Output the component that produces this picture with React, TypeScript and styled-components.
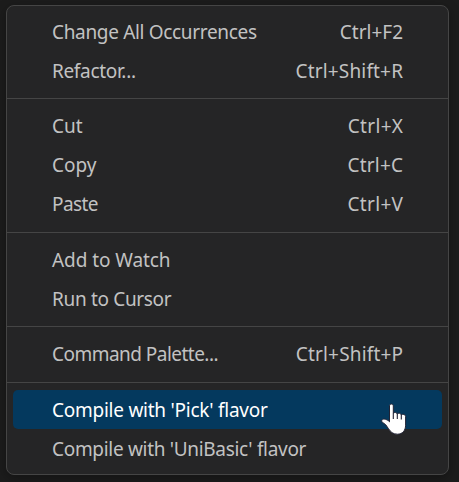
import React from "react";
import styled, { createGlobalStyle } from "styled-components";

const GlobalStyle = createGlobalStyle`
  * { box-sizing: border-box; }
  body {
    margin: 0;
    background: #1c1c1c;
    overflow: hidden;
  }
`;

const Page = styled.main`
  position: relative;
  width: 459px;
  height: 482px;
  padding: 5px 10px 7px 6px;
  background: #1c1c1c;
`;

const Menu = styled.div`
  width: 443px;
  height: 470px;
  padding: 6px 0;
  border: 1px solid #454545;
  border-radius: 8px;
  background: #252526;
  box-shadow: 0 3px 12px rgba(0, 0, 0, 0.32);
  font-family: "Noto Sans", "Open Sans", sans-serif;
  font-size: 19px;
`;

const MenuItem = styled.div<{ $active?: boolean }>`
  display: flex;
  align-items: flex-start;
  justify-content: space-between;
  height: 39px;
  margin: 0 6px;
  padding: 0 39px;
  border-radius: 5px;
  line-height: 40px;
  white-space: pre;
  color: ${({ $active }) => ($active ? "#ffffff" : "#c2c2c2")};
  background: ${({ $active }) => ($active ? "#04395e" : "transparent")};
`;

const Label = styled.span<{ $tracking?: number }>`
  letter-spacing: ${({ $tracking = 0 }) => $tracking}px;
  margin-right: ${({ $tracking = 0 }) => -$tracking}px;
`;

const Separator = styled.div<{ $gap: number }>`
  height: ${({ $gap }) => $gap + 8}px;
  padding-top: ${({ $gap }) => $gap}px;

  &::before {
    content: "";
    display: block;
    height: 1px;
    background: #454545;
  }
`;

const Cursor = styled.svg`
  position: absolute;
  left: 380px;
  top: 401px;
`;

interface Entry {
  label: string;
  tracking?: number;
  keys?: string;
  keyTracking?: number;
  active?: boolean;
}

const groups: Entry[][] = [
  [
    { label: "Change All Occurrences", tracking: -0.33, keys: "Ctrl+F2" },
    { label: "Refactor...", tracking: -0.33, keys: "Ctrl+Shift+R", keyTracking: 0.17 },
  ],
  [
    { label: "Cut", keys: "Ctrl+X", keyTracking: 0.33 },
    { label: "Copy", keys: "Ctrl+C", keyTracking: 0.2 },
    { label: "Paste", tracking: -0.6, keys: "Ctrl+V", keyTracking: 0.33 },
  ],
  [
    { label: "Add to Watch", tracking: -0.08 },
    { label: "Run to Cursor", tracking: -0.33 },
  ],
  [{ label: "Command Palette...", tracking: -0.53, keys: "Ctrl+Shift+P", keyTracking: 0.17 }],
  [
    { label: "Compile with 'Pick' flavor", tracking: -0.25, active: true },
    { label: "Compile with 'UniBasic' flavor", tracking: -0.31 },
  ],
];

export default function App() {
  return (
    <Page>
      <GlobalStyle />
      <Menu role="menu">
        {groups.map((group, index) => (
          <React.Fragment key={index}>
            {index > 0 && <Separator role="separator" $gap={index % 2 ? 8 : 9} />}
            {group.map((entry) => (
              <MenuItem key={entry.label} role="menuitem" $active={entry.active}>
                <Label $tracking={entry.tracking}>{entry.label}</Label>
                {entry.keys && <Label $tracking={entry.keyTracking}>{entry.keys}</Label>}
              </MenuItem>
            ))}
          </React.Fragment>
        ))}
      </Menu>
      <Cursor width="28" height="35" viewBox="0 0 28 35" aria-hidden="true">
        <path
          d="M9.5 20.8V5C9.5 2.4 13.3 2.4 13.3 5V12.4C14.5 10.9 17 11.4 17.2 13C18.6 11.7 21 12.2 21.2 13.9C22.7 12.7 25.6 13.2 25.6 15.5V24.2C25.6 29.5 22.4 33.2 17.5 33.2C12.8 33.2 10.7 30.9 8.5 27.7L5.7 23.7L2.3 21.2C0.8 19.7 2.3 18.1 4.2 18.1C6.2 18.3 8.2 19.2 9.5 20.8Z"
          fill="#ffffff"
          stroke="#202234"
          strokeWidth="1"
          strokeLinejoin="round"
        />
        <path d="M13.3 12.3V18M17.3 13V18M21.3 14V18.5" fill="none" stroke="#202234" strokeWidth="1.1" />
      </Cursor>
    </Page>
  );
}
